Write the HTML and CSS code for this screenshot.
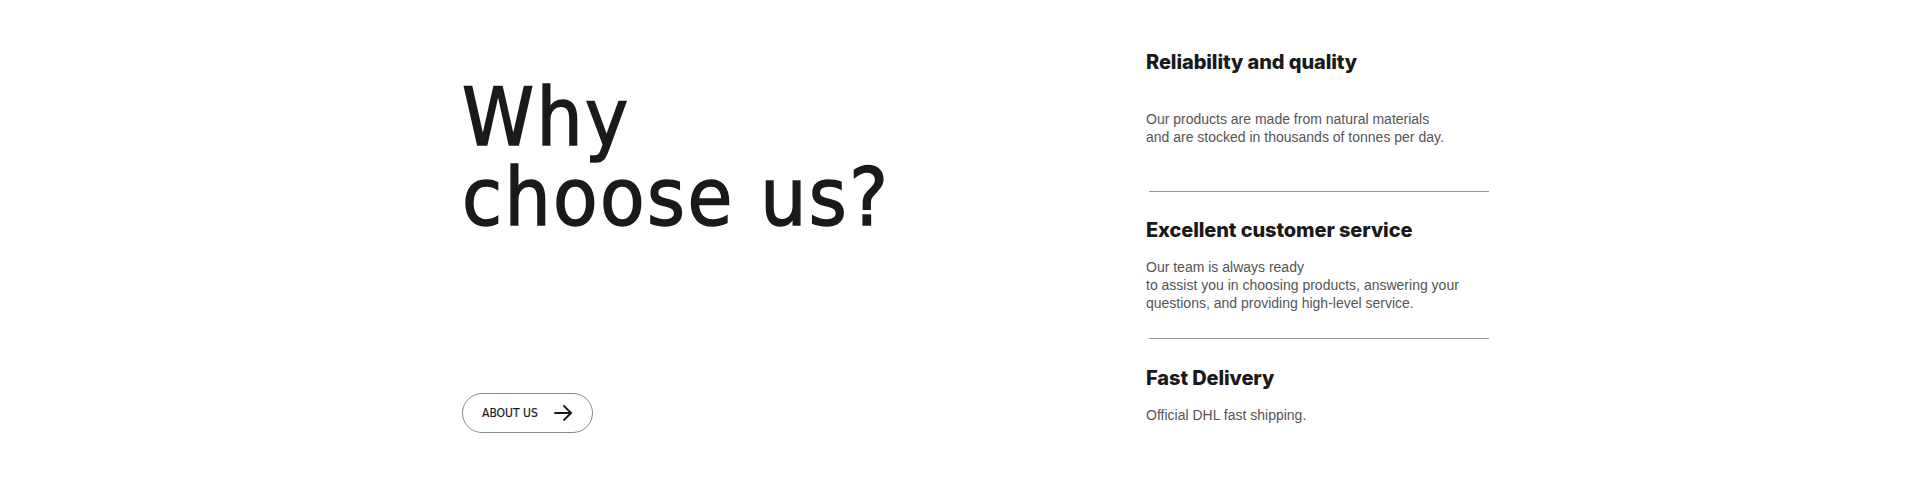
FILE: index.html
```html
<!DOCTYPE html>
<html lang="en">
<head>
<meta charset="utf-8">
<title>Why choose us?</title>
<link rel="stylesheet" href="styles.css">
</head>
<body>
<section class="why">
  <div class="why-left">
    <h2 class="why-title">Why<br>choose us?</h2>
    <a class="btn-about" href="#">
      <span class="btn-label">ABOUT US</span>
      <svg class="btn-arrow" width="18" height="16" viewBox="0 0 18 16" fill="none" stroke="#1a1a1a" stroke-width="1.8" stroke-linecap="round" stroke-linejoin="round">
        <path d="M1 8H17"/>
        <path d="M10 1L17 8L10 15"/>
      </svg>
    </a>
  </div>
  <div class="why-right">
    <div class="feature feature-first">
      <h3 class="feature-title">Reliability and quality</h3>
      <p class="feature-text">Our products are made from natural materials<br>and are stocked in thousands of tonnes per day.</p>
    </div>
    <hr class="divider">
    <div class="feature">
      <h3 class="feature-title">Excellent customer service</h3>
      <p class="feature-text">Our team is always ready<br>to assist you in choosing products, answering your<br>questions, and providing high-level service.</p>
    </div>
    <hr class="divider">
    <div class="feature feature-last">
      <h3 class="feature-title">Fast Delivery</h3>
      <p class="feature-text">Official DHL fast shipping.</p>
    </div>
  </div>
</section>
</body>
</html>
```
FILE: styles.css
```css
* { box-sizing: border-box; }
html, body { margin: 0; padding: 0; background: #fff; }
body { font-family: "Liberation Sans", Arial, sans-serif; }

.why {
  display: flex;
  width: 1030px;
  margin-left: 462px;
  padding-top: 50px;
  height: 480px;
}

.why-left {
  width: 684px;
  display: flex;
  flex-direction: column;
  align-items: flex-start;
  padding-top: 27px;
}

.why-title {
  margin: 0;
  font-family: "DejaVu Sans Condensed", "DejaVu Sans", sans-serif;
  font-weight: 400;
  font-size: 81px;
  line-height: 80px;
  letter-spacing: 2.4px;
  color: #1a1a1a;
  -webkit-text-stroke: 1.5px #1a1a1a;
}

.btn-about {
  margin-top: 156px;
  display: inline-flex;
  align-items: center;
  justify-content: space-between;
  height: 40px;
  width: 131px;
  padding: 0 20px 0 19px;
  border: 1px solid #8a8a8a;
  border-radius: 20px;
  text-decoration: none;
  color: #1a1a1a;
  white-space: nowrap;
}

.btn-label {
  font-family: "DejaVu Sans Condensed", "DejaVu Sans", sans-serif;
  font-size: 12px;
  line-height: 14px;
  -webkit-text-stroke: 0.2px #1a1a1a;
}

.btn-arrow { flex: none; }

.why-right {
  width: 346px;
  display: flex;
  flex-direction: column;
}

.feature { padding: 26px 0 26px; }
.feature-first { padding-top: 0; padding-bottom: 45px; }
.feature-last { padding-top: 27px; }

.divider {
  margin: 0 0 0 3px;
  width: 340px;
  height: 0;
  border: none;
  border-top: 1px solid #999;
}

.feature-title {
  margin: 0;
  font-family: Inter, "Noto Sans", sans-serif;
  font-weight: 800;
  font-size: 20px;
  line-height: 24px;
  letter-spacing: -0.1px;
  color: #1a1a1a;
}

.feature-text {
  margin: 16px 0 0;
  font-family: "Liberation Sans", Arial, sans-serif;
  font-size: 14px;
  line-height: 18px;
  color: #555;
}
.feature-first .feature-text { margin-top: 36px; }
```
